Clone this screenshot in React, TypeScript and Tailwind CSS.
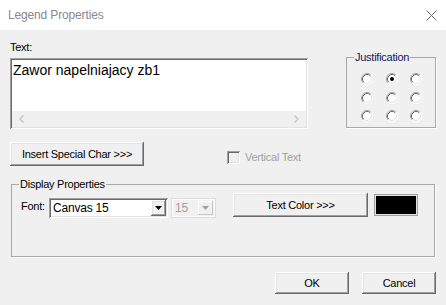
import React from "react";

const Radio = ({ checked }: { checked?: boolean }) => (
  <svg width="12" height="12" viewBox="0 0 12 12" className="block">
    <circle cx="6" cy="6" r="5" fill="#ffffff" />
    <path d="M2.11 9.89 A5.5 5.5 0 0 1 9.89 2.11" fill="none" stroke="#a0a0a0" strokeWidth="1" />
    <path d="M9.89 2.11 A5.5 5.5 0 0 1 2.11 9.89" fill="none" stroke="#ffffff" strokeWidth="1" />
    <path d="M2.82 9.18 A4.5 4.5 0 0 1 9.18 2.82" fill="none" stroke="#696969" strokeWidth="1" />
    <path d="M9.18 2.82 A4.5 4.5 0 0 1 2.82 9.18" fill="none" stroke="#e3e3e3" strokeWidth="1" />
    {checked && <circle cx="6" cy="6" r="2" fill="#000000" />}
  </svg>
);

const raised =
  "bg-[#f0f0f0] shadow-[inset_-1px_-1px_0_#696969,inset_1px_1px_0_#ffffff,inset_-2px_-2px_0_#a0a0a0,inset_2px_2px_0_#e3e3e3]";
const sunken =
  "shadow-[inset_1px_1px_0_#a0a0a0,inset_-1px_-1px_0_#ffffff,inset_2px_2px_0_#696969,inset_-2px_-2px_0_#e3e3e3]";

const Arrow = ({ color }: { color: string }) => (
  <svg width="7" height="4" viewBox="0 0 7 4" className="block">
    <path d="M0 0 H7 L3.5 4 Z" fill={color} />
  </svg>
);

export default function App() {
  return (
    <div className="w-[446px] h-[305px] bg-[#f0f0f0] font-['Liberation_Sans',Arial,sans-serif] text-[11px] leading-[13px] text-black tracking-[-0.25px] overflow-hidden">
      {/* Title bar */}
      <div className="h-[30px] bg-white flex items-center justify-between pl-[8px] pr-[9px]">
        <span className="text-[12px] text-[#8a8a8a] tracking-[-0.15px]">Legend Properties</span>
        <svg width="11" height="11" viewBox="0 0 11 11" className="block">
          <path d="M0.5 0.5 L10.5 10.5 M10.5 0.5 L0.5 10.5" stroke="#6a6a6a" strokeWidth="1" />
        </svg>
      </div>

      <div className="px-[10px] flex flex-col">
        {/* Row 1 */}
        <div className="flex items-start gap-[38px]">
          <div className="flex flex-col mt-[11px]">
            <span className="mb-[4px]">Text:</span>
            <div className={`w-[298px] h-[71px] p-[2px] ${sunken}`}>
              <div className="h-full bg-white flex flex-col">
                <div className="flex-1 pl-[1px] pt-[2px] text-[14px] leading-[16px] tracking-normal">
                  Zawor napelniajacy zb1
                </div>
                <div className="h-[16px] bg-[#f0f0f0] flex items-center justify-between px-[7px]">
                  <svg width="5" height="8" viewBox="0 0 5 8" className="block">
                    <path d="M4.5 0.5 L1 4 L4.5 7.5" fill="none" stroke="#c8c8c8" strokeWidth="1.5" />
                  </svg>
                  <svg width="5" height="8" viewBox="0 0 5 8" className="block">
                    <path d="M0.5 0.5 L4 4 L0.5 7.5" fill="none" stroke="#c8c8c8" strokeWidth="1.5" />
                  </svg>
                </div>
              </div>
            </div>
          </div>

          <fieldset className="mt-[21px] w-[90px] h-[77px] border border-[#a8a8a8] shadow-[1px_1px_0_#ffffff]">
            <legend className="ml-[7px] px-[1px] text-[#14145a]">Justification</legend>
            <div className="grid grid-cols-[12px_12px_12px] gap-x-[12.5px] gap-y-[6.5px] pl-[14px] pt-[9px]">
              <Radio />
              <Radio checked />
              <Radio />
              <Radio />
              <Radio />
              <Radio />
              <Radio />
              <Radio />
              <Radio />
            </div>
          </fieldset>
        </div>

        {/* Row 2 */}
        <div className="flex items-start mt-[13px]">
          <button className={`w-[134px] h-[24px] ${raised} flex items-center justify-center`}>
            Insert Special Char &gt;&gt;&gt;
          </button>
          <div className="ml-[83px] mt-[9px] flex items-center gap-[5px]">
            <div className={`w-[13px] h-[13px] bg-[#f0f0f0] ${sunken}`} />
            <span className="text-[#a0a0a0]">Vertical Text</span>
          </div>
        </div>

        {/* Display properties */}
        <fieldset className="mt-[12px] mx-[1px] h-[79px] border border-[#a8a8a8] shadow-[1px_1px_0_#ffffff]">
          <legend className="ml-[7px] px-[1px]">Display Properties</legend>
          <div className="flex items-start pl-[9px]">
            <span className="w-[28px] mt-[9px]">Font:</span>
            <div className={`mt-[7px] w-[119px] h-[20px] p-[2px] ${sunken}`}>
              <div className="h-full bg-white flex items-center">
                <span className="flex-1 pl-[2px] text-[12px] tracking-[-0.2px]">Canvas 15</span>
                <div className={`w-[15px] h-full ${raised} flex items-center justify-center`}>
                  <Arrow color="#000000" />
                </div>
              </div>
            </div>
            <div className={`ml-[3px] mt-[7px] w-[45px] h-[20px] p-[2px] shadow-[inset_0_0_0_1px_#ffffff] border border-[#dcdcdc]`}>
              <div className="h-full bg-[#f0f0f0] flex items-center">
                <span className="flex-1 pl-[1px] text-[12px] text-[#a0a0a0]">15</span>
                <div className="w-[15px] h-full bg-[#f0f0f0] shadow-[inset_-1px_-1px_0_#c8c8c8,inset_1px_1px_0_#ffffff] flex items-center justify-center">
                  <Arrow color="#a0a0a0" />
                </div>
              </div>
            </div>
            <button className={`ml-[17px] mt-[2px] w-[135px] h-[24px] ${raised} flex items-center justify-center`}>
              Text Color &gt;&gt;&gt;
            </button>
            <div className="ml-[6px] mt-[3px] w-[44px] h-[22px] border border-[#a0a0a0] p-[1px] bg-[#e3e3e3]">
              <div className="w-full h-full bg-black" />
            </div>
          </div>
        </fieldset>

        {/* Bottom buttons */}
        <div className="flex justify-end gap-[13px] mt-[15px]">
          <button className={`w-[74px] h-[22px] ${raised} flex items-center justify-center`}>OK</button>
          <button className={`w-[74px] h-[22px] ${raised} flex items-center justify-center`}>Cancel</button>
        </div>
      </div>
    </div>
  );
}
